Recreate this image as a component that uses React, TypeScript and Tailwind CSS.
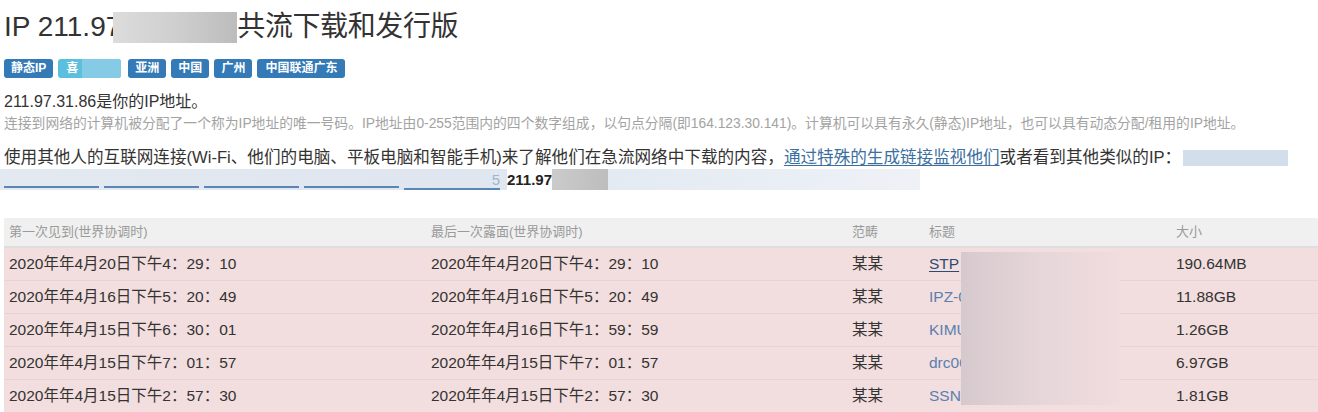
import React from 'react';

type Row = {
    first: string;
    last: string;
    category: string;
    title: string;
    size: string;
};

const ROWS: Row[] = [
    { first: '2020年年4月20日下午4：29：10', last: '2020年年4月20日下午4：29：10', category: '某某', title: 'STP', size: '190.64MB' },
    { first: '2020年年4月16日下午5：20：49', last: '2020年年4月16日下午5：20：49', category: '某某', title: 'IPZ-0', size: '11.88GB' },
    { first: '2020年年4月15日下午6：30：01', last: '2020年年4月16日下午1：59：59', category: '某某', title: 'KIMU', size: '1.26GB' },
    { first: '2020年年4月15日下午7：01：57', last: '2020年年4月15日下午7：01：57', category: '某某', title: 'drc00', size: '6.97GB' },
    { first: '2020年年4月15日下午2：57：30', last: '2020年年4月15日下午2：57：30', category: '某某', title: 'SSN', size: '1.81GB' },
];

const BADGES = ['亚洲', '中国', '广州', '中国联通广东'];

const FONT = "font-['Liberation_Sans','Noto_Sans_CJK_SC',sans-serif]";

export default function App() {
    return (
        <div className={`${FONT} bg-white text-[#333] min-h-[412px] overflow-hidden`}>
            <div className="pl-1">
                {/* heading */}
                <h1 className="mt-[10px] text-[28px] leading-[34px] font-normal flex items-center">
                    <span>IP 211.97</span>
                    <span className="inline-block w-[124px] h-[31px] -ml-[8px] bg-gradient-to-r from-[#dcdcdc] via-[#cfcfcf] to-[#bcbcbc]"></span>
                    <span className="tracking-[-0.4px]">共流下载和发行版</span>
                </h1>

                {/* labels */}
                <div className="mt-[15px] flex items-center gap-[5px]">
                    <span className="h-[19px] px-[7px] rounded-[3px] bg-[#337ab7] text-white text-[12px] font-bold leading-[19px]">静态IP</span>
                    <span className="h-[19px] w-[63px] pl-[8px] rounded-[3px] bg-[#5bc0de] text-white text-[12px] font-bold leading-[19px] flex overflow-hidden mr-[2px]">
                        <span>喜</span>
                        <span className="ml-[4px] w-[39px] h-full bg-[#86cbe6]"></span>
                    </span>
                    {BADGES.map(b => (
                        <span
                            key={b}
                            className={
                                b.length > 2
                                    ? 'h-[19px] px-[8px] rounded-[3px] bg-[#337ab7] text-white text-[12px] font-bold leading-[19px]'
                                    : 'h-[19px] px-[7px] rounded-[3px] bg-[#337ab7] text-white text-[12px] font-bold leading-[19px]'
                            }
                        >
                            {b}
                        </span>
                    ))}
                </div>

                {/* description */}
                <p className="mt-[13px] text-[16px] leading-[22px]">211.97.31.86是你的IP地址。</p>
                <p className="text-[13.8px] leading-[22px] text-[#a3a3a3] whitespace-nowrap">
                    连接到网络的计算机被分配了一个称为IP地址的唯一号码。IP地址由0-255范围内的四个数字组成，以句点分隔(即164.123.30.141)。计算机可以具有永久(静态)IP地址，也可以具有动态分配/租用的IP地址。
                </p>
                <p className="mt-[12px] text-[16.6px] leading-[22px] whitespace-nowrap flex items-center">
                    <span>使用其他人的互联网连接(Wi-Fi、他们的电脑、平板电脑和智能手机)来了解他们在急流网络中下载的内容，</span>
                    <a href="#" className="text-[#3b6f9f] underline underline-offset-2">通过特殊的生成链接监视他们</a>
                    <span>或者看到其他类似的IP：</span>
                    <span className="ml-[2px] inline-block w-[105px] h-[16px] bg-[#d3deeb]"></span>
                </p>

                {/* similar IPs (blurred) */}
                <div className="-ml-1 w-[920px] h-[21px] flex items-end bg-gradient-to-r from-[#e3e9f1] via-[#dfe6ef] to-[#eef2f7]">
                    <div className="flex items-end pl-1 gap-[5px]">
                        {[0, 1, 2, 3].map(i => (
                            <span key={i} className="w-[95px] h-[2px] mb-[2px] bg-[#5b86b4]"></span>
                        ))}
                        <span className="w-[96px] h-[19px] border-b-2 border-[#5b86b4] text-right text-[15px] leading-[17px] text-[#9fb6cf]">5</span>
                    </div>
                    <span className="ml-[7px] self-center text-[15px] font-bold text-[#222] leading-[21px] bg-white">211.97</span>
                    <span className="w-[56px] h-full bg-gradient-to-r from-[#cbcbcb] to-[#bdbdbd]"></span>
                </div>
            </div>

            {/* torrent table */}
            <div className="relative mt-[28px] ml-1">
                <table className="w-[1314px] table-fixed border-collapse text-left">
                    <colgroup>
                        <col className="w-[422px]" />
                        <col className="w-[421px]" />
                        <col className="w-[77px]" />
                        <col className="w-[247px]" />
                        <col />
                    </colgroup>
                    <thead>
                        <tr className="bg-[#f0f0f0] border-b-2 border-[#dedede] text-[13px] text-[#9a9a9a]">
                            <th className="h-[29px] px-[5px] font-normal">第一次见到(世界协调时)</th>
                            <th className="h-[29px] px-[5px] font-normal">最后一次露面(世界协调时)</th>
                            <th className="h-[29px] px-[5px] font-normal">范畴</th>
                            <th className="h-[29px] px-[5px] font-normal">标题</th>
                            <th className="h-[29px] px-[5px] font-normal">大小</th>
                        </tr>
                    </thead>
                    <tbody className="text-[15.5px]">
                        {ROWS.map((r, i) => (
                            <tr key={i} className="bg-[#f2dede] border-t border-[#e9d2d2] first:border-t-0">
                                <td className="h-[33px] px-[5px]">{r.first}</td>
                                <td className="h-[33px] px-[5px]">{r.last}</td>
                                <td className="h-[33px] px-[5px]">{r.category}</td>
                                <td className="h-[33px] px-[5px]">
                                    <a
                                        href="#"
                                        className={i === 0 ? 'text-[#2c4b6e] underline underline-offset-2' : 'text-[#5a80b0]'}
                                    >
                                        {r.title}
                                    </a>
                                </td>
                                <td className="h-[33px] px-[5px]">{r.size}</td>
                            </tr>
                        ))}
                    </tbody>
                </table>
                {/* blurred titles */}
                <div className="absolute left-[957px] top-[34px] w-[159px] h-[153px] bg-gradient-to-r from-[#d6c9cd] via-[#e6d6d9] to-[#f1dcde]"></div>
            </div>
        </div>
    );
}
